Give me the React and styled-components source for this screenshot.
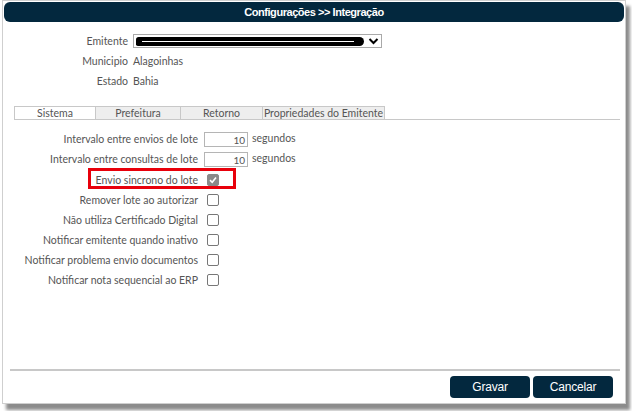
import styled, { createGlobalStyle } from 'styled-components'

const GlobalStyle = createGlobalStyle`
body {
  margin: 0;
  background: #ffffff;
  font-family: Lato, "Open Sans", sans-serif;
}
`

const Screen = styled.div`
width: 632px;
height: 411px;
overflow: hidden;
background: #ffffff;
`

const Dialog = styled.div`
margin-left: 2px;
width: 622px;
height: 401px;
border: 1px solid #cfcfcf;
background: #ffffff;
box-shadow: 4px 6px 3px rgba(0,0,0,0.45);
display: flex;
flex-direction: column;
padding: 1px 0 0 0;
`

const Header = styled.div`
height: 20px;
background: #03283e;
border-radius: 6px;
margin: 0 1px;
display: flex;
justify-content: center;
align-items: center;
color: #ffffff;
font-family: "Liberation Sans", sans-serif;
font-weight: bold;
font-size: 11px;
letter-spacing: -0.45px;
`

const InfoGrid = styled.div`
margin-top: 9px;
display: grid;
grid-template-columns: 125px 1fr;
column-gap: 5px;
grid-auto-rows: 20px;
align-items: center;
font-size: 10.5px;
`

const Label = styled.span`
text-align: right;
color: #555;
white-space: nowrap;
`

const Value = styled.span`
color: #555;
`

const Select = styled.div`
width: 243px;
height: 12px;
border: 1px solid #a9a9a9;
display: flex;
align-items: center;
padding: 0 2px 0 2px;
gap: 4px;
`

const Redacted = styled.div`
flex: 1;
height: 9px;
background: #000;
border-radius: 3px 5px 5px 2px;
position: relative;
&::after {
  content: '';
  position: absolute;
  left: 6px;
  right: 10px;
  top: 4px;
  height: 1px;
  background: #fff;
}
`

const Tabs = styled.div`
margin: 15px 5px 0 11px;
display: flex;
height: 13px;
border-bottom: 1px solid #c8c8c8;
`

const Tab = styled.div`
width: ${p => p.$w}px;
box-sizing: border-box;
border: 1px solid #c8c8c8;
border-bottom: none;
margin-right: -1px;
background: ${p => p.$active ? '#ffffff' : '#eeeeee'};
color: #555;
font-size: 10.5px;
line-height: 13px;
text-align: center;
white-space: nowrap;
`

const Panel = styled.div`
margin-top: 9px;
display: flex;
flex-direction: column;
flex: 1;
`

const Row = styled.div`
position: relative;
display: grid;
grid-template-columns: 195px auto auto;
justify-content: start;
column-gap: 6px;
height: ${p => p.$h || 20}px;
align-items: center;
font-size: 10.5px;
`

const NumberBox = styled.div`
width: 40px;
height: 13px;
border: 1px solid #b5b5b5;
text-align: right;
padding-right: 2px;
font-size: 10px;
line-height: 14px;
color: #555;
`

const Unit = styled.span`
color: #555;
margin-left: -2px;
margin-top: -3px;
`

const Check = styled.span`
margin-left: 3px;
width: 10px;
height: 10px;
border: 1px solid ${p => p.$on ? '#8a8a8a' : '#777'};
background: ${p => p.$on ? '#8a8a8a' : '#fff'};
border-radius: 2px;
display: flex;
align-items: center;
justify-content: center;
`

const Highlight = styled.div`
position: absolute;
left: 85px;
top: -1px;
width: 142px;
height: 15px;
border: 3px solid #e8000b;
pointer-events: none;
`

const Footer = styled.div`
margin: 0 5px 0 7px;
border-top: 2px solid #c8c8c8;
padding: 5px 7px 5px 0;
display: flex;
justify-content: flex-end;
gap: 3px;
`

const Button = styled.button`
width: 80px;
height: 22px;
background: #03283e;
color: #fff;
border: none;
border-radius: 4px;
font-family: "Liberation Sans", sans-serif;
font-size: 12px;
letter-spacing: -0.2px;
padding: 0;
`

const CheckMark = () => (
  <svg width="8" height="8" viewBox="0 0 8 8">
    <path d="M1 4.2 L3.2 6.3 L7 1.5" fill="none" stroke="#fff" strokeWidth="1.6" />
  </svg>
)

const Chevron = () => (
  <svg width="11" height="8" viewBox="0 0 11 8">
    <path d="M1.5 2 L5.5 6 L9.5 2" fill="none" stroke="#000" strokeWidth="2" />
  </svg>
)

const checks = [
  'Remover lote ao autorizar',
  'Não utiliza Certificado Digital',
  'Notificar emitente quando inativo',
  'Notificar problema envio documentos',
  'Notificar nota sequencial ao ERP',
]

export default function App() {
  return (
    <Screen>
      <GlobalStyle />
      <Dialog>
        <Header>Configurações &gt;&gt; Integração</Header>
        <InfoGrid>
          <Label>Emitente</Label>
          <Select>
            <Redacted />
            <Chevron />
          </Select>
          <Label>Municipio</Label>
          <Value>Alagoinhas</Value>
          <Label>Estado</Label>
          <Value>Bahia</Value>
        </InfoGrid>
        <Tabs>
          <Tab $w={82} $active>Sistema</Tab>
          <Tab $w={86}>Prefeitura</Tab>
          <Tab $w={83}>Retorno</Tab>
          <Tab $w={123}>Propriedades do Emitente</Tab>
        </Tabs>
        <Panel>
          <Row>
            <Label>Intervalo entre envios de lote</Label>
            <NumberBox>10</NumberBox>
            <Unit>segundos</Unit>
          </Row>
          <Row>
            <Label>Intervalo entre consultas de lote</Label>
            <NumberBox>10</NumberBox>
            <Unit>segundos</Unit>
          </Row>
          <Row $h={21}>
            <Label>Envio sincrono do lote</Label>
            <Check $on><CheckMark /></Check>
            <Highlight />
          </Row>
          {checks.map(t => (
            <Row key={t}>
              <Label>{t}</Label>
              <Check />
            </Row>
          ))}
        </Panel>
        <Footer>
          <Button>Gravar</Button>
          <Button>Cancelar</Button>
        </Footer>
      </Dialog>
    </Screen>
  )
}
